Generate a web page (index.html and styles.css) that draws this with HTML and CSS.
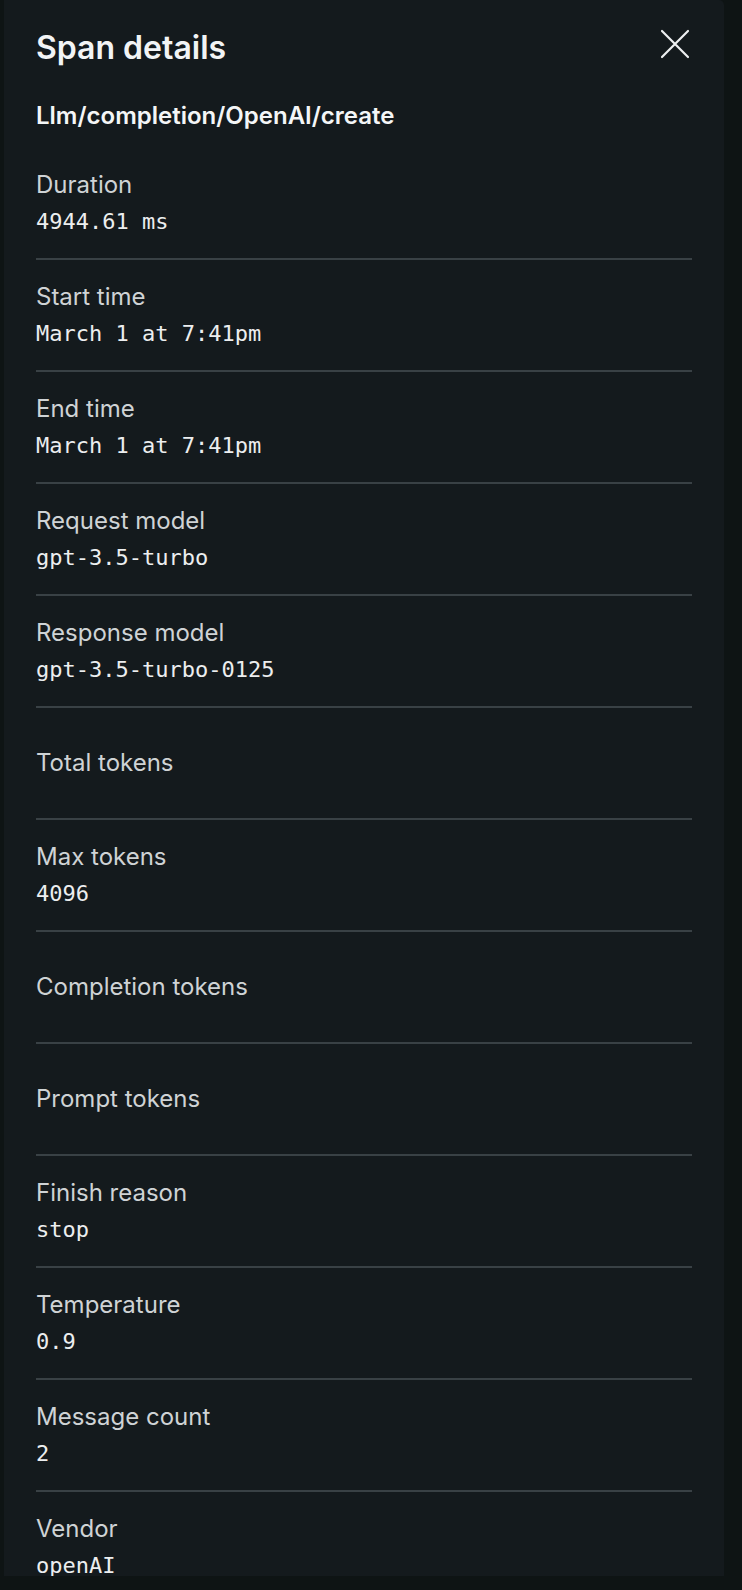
FILE: index.html
```html
<!DOCTYPE html>
<html lang="en">
<head>
<meta charset="utf-8">
<title>Span details</title>
<link rel="stylesheet" href="styles.css">
</head>
<body>
<aside class="panel">
  <header class="panel-header">
    <h1 class="panel-title">Span details</h1>
    <button class="close-btn" aria-label="Close">
      <svg width="30" height="30" viewBox="0 0 30 30" fill="none" stroke="currentColor" stroke-width="2.2" stroke-linecap="round">
        <path d="M2 2 L28 28 M28 2 L2 28"/>
      </svg>
    </button>
  </header>
  <h2 class="span-name">Llm/completion/OpenAI/create</h2>
  <dl class="attr-list">
    <div class="attr"><dt>Duration</dt><dd>4944.61 ms</dd></div>
    <div class="attr"><dt>Start time</dt><dd>March 1 at 7:41pm</dd></div>
    <div class="attr"><dt>End time</dt><dd>March 1 at 7:41pm</dd></div>
    <div class="attr"><dt>Request model</dt><dd>gpt-3.5-turbo</dd></div>
    <div class="attr"><dt>Response model</dt><dd>gpt-3.5-turbo-0125</dd></div>
    <div class="attr"><dt>Total tokens</dt></div>
    <div class="attr"><dt>Max tokens</dt><dd>4096</dd></div>
    <div class="attr"><dt>Completion tokens</dt></div>
    <div class="attr"><dt>Prompt tokens</dt></div>
    <div class="attr"><dt>Finish reason</dt><dd>stop</dd></div>
    <div class="attr"><dt>Temperature</dt><dd>0.9</dd></div>
    <div class="attr"><dt>Message count</dt><dd>2</dd></div>
    <div class="attr"><dt>Vendor</dt><dd>openAI</dd></div>
  </dl>
</aside>
</body>
</html>
```

FILE: styles.css
```css
html, body {
  margin: 0;
  padding: 0;
  background: #0e1414;
  height: 1590px;
  overflow: hidden;
}

.panel {
  box-sizing: border-box;
  margin-left: 4px;
  width: 720px;
  height: 1576px;
  overflow: hidden;
  background: #141a1d;
  border-radius: 0 5px 0 0;
  padding: 30px 32px 0 32px;
  font-family: Inter, "Noto Sans", sans-serif;
  color: #f2f4f5;
}

.panel-header {
  display: flex;
  justify-content: space-between;
  align-items: center;
  height: 36px;
}

.panel-title {
  margin: 0;
  font-size: 32px;
  line-height: 36px;
  font-weight: 600;
  color: #f2f4f5;
}

.close-btn {
  background: none;
  border: 0;
  padding: 0;
  margin-right: 2px;
  margin-top: -8px;
  color: #eef0f1;
  width: 30px;
  height: 30px;
  display: flex;
}

.span-name {
  margin: 35px 0 0 0;
  font-size: 24px;
  line-height: 30px;
  font-weight: 600;
  color: #f4f6f7;
}

.attr-list {
  margin: 17px 0 0 0;
  padding: 0;
}

.attr {
  box-sizing: border-box;
  min-height: 112px;
  border-bottom: 2px solid #394145;
  display: flex;
  flex-direction: column;
  justify-content: center;
  gap: 5px;
}

.attr dt {
  font-size: 24px;
  line-height: 32px;
  color: #cfd3d5;
  font-weight: 400;
}

.attr dd {
  margin: 0;
  font-family: "DejaVu Sans Mono", "Liberation Mono", monospace;
  font-size: 22px;
  line-height: 32px;
  color: #eceeef;
}
```
